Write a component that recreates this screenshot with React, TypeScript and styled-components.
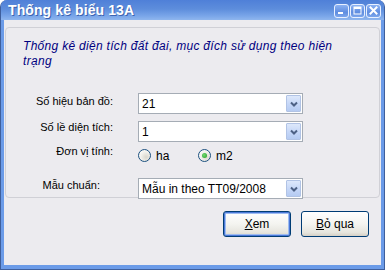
import styled, { createGlobalStyle } from "styled-components";

const GlobalStyle = createGlobalStyle`
  html, body {
    margin: 0;
    padding: 0;
    background: #ffffff;
  }
  body {
    font-family: "Liberation Sans", Arial, sans-serif;
  }
`;

function MinimizeGlyph() {
  return (
    <svg width="9" height="9" viewBox="0 0 9 9">
      <rect x="1" y="6" width="5" height="2" fill="#fff" />
    </svg>
  );
}

function MaximizeGlyph() {
  return (
    <svg width="9" height="9" viewBox="0 0 9 9">
      <rect x="1" y="1" width="7" height="7" fill="none" stroke="#fff" strokeWidth="1" />
      <rect x="1" y="1" width="7" height="2" fill="#fff" />
    </svg>
  );
}

function CloseGlyph() {
  return (
    <svg width="9" height="9" viewBox="0 0 9 9">
      <path d="M1.5 1.5 L7.5 7.5 M7.5 1.5 L1.5 7.5" stroke="#fff" strokeWidth="2" strokeLinecap="square" />
    </svg>
  );
}

function ArrowDown() {
  return (
    <svg width="8" height="6" viewBox="0 0 8 6">
      <path d="M1 1.5 L4 4.5 L7 1.5" fill="none" stroke="#4d6185" strokeWidth="2" />
    </svg>
  );
}

function Combo({ value }: { value: string }) {
  return (
    <ComboBox>
      <ComboText>{value}</ComboText>
      <ComboButton>
        <ArrowDown />
      </ComboButton>
    </ComboBox>
  );
}

function Radio({ label, checked }: { label: string; checked?: boolean }) {
  return (
    <RadioOption>
      <RadioCircle>{checked && <RadioDot />}</RadioCircle>
      <span>{label}</span>
    </RadioOption>
  );
}

export default function App() {
  return (
    <>
      <GlobalStyle />
      <Window>
        <TitleBar>
          <TitleText>Thống kê biểu 13A</TitleText>
          <TitleButtons>
            <TitleButton><MinimizeGlyph /></TitleButton>
            <TitleButton><MaximizeGlyph /></TitleButton>
            <TitleButton><CloseGlyph /></TitleButton>
          </TitleButtons>
        </TitleBar>
        <Client>
          <GroupBox>
            <Description>
              Thống kê diện tích đất đai, mục đích sử dụng theo hiện trạng
            </Description>
            <Form>
              <Label $offset={2}>Số hiệu bản đồ:</Label>
              <Combo value="21" />
              <Label $offset={0}>Số lề diện tích:</Label>
              <Combo value="1" />
              <Label $offset={-4}>Đơn vị tính:</Label>
              <RadioGroup>
                <Radio label="ha" />
                <Radio label="m2" checked />
              </RadioGroup>
              <Label $offset={1} $pad={13} $spaced>Mẫu chuẩn:</Label>
              <Spaced>
                <Combo value="Mẫu in theo TT09/2008" />
              </Spaced>
            </Form>
          </GroupBox>
          <ButtonRow>
            <Button $default>
              <u>X</u>em
            </Button>
            <Button>
              <u>B</u>ỏ qua
            </Button>
          </ButtonRow>
        </Client>
      </Window>
    </>
  );
}

const Window = styled.div`
  width: 385px;
  height: 270px;
  box-sizing: border-box;
  display: flex;
  flex-direction: column;
  background: #6b9be8;
  border: 1px solid #3f5f9c;
  border-top: none;
  border-radius: 7px 7px 0 0;
  overflow: hidden;
`;

const TitleBar = styled.div`
  height: 20px;
  flex: none;
  display: flex;
  align-items: center;
  justify-content: space-between;
  padding: 0 3px 0 7px;
  background: linear-gradient(#4f80d8 0%, #5d8ddc 45%, #7aa6e9 80%, #8fb6ee 100%);
`;

const TitleText = styled.div`
  color: #ffffff;
  font-weight: bold;
  font-size: 14px;
  letter-spacing: 0.1px;
  text-shadow: 1px 1px 0 #3c63b0;
  margin-top: -1px;
`;

const TitleButtons = styled.div`
  display: flex;
  gap: 1px;
  margin-top: 1px;
`;

const TitleButton = styled.div`
  width: 15px;
  height: 14px;
  box-sizing: border-box;
  border: 1px solid #e8f0ff;
  border-radius: 3px;
  background: linear-gradient(#8cb2f2, #5f8de0 60%, #7ca6ec);
  display: flex;
  align-items: center;
  justify-content: center;
`;

const Client = styled.div`
  flex: 1;
  margin: 0 3px 4px 3px;
  background: #ecebef;
  display: flex;
  flex-direction: column;
  padding: 7px 1px 0 1px;
`;

const GroupBox = styled.div`
  height: 171px;
  box-sizing: border-box;
  border: 1px solid #d0d0d6;
  border-radius: 4px;
  padding: 11px 0 0 17px;
`;

const Description = styled.div`
  width: 336px;
  color: #000080;
  font-style: italic;
  font-size: 12px;
  line-height: 15px;
  letter-spacing: 0.3px;
`;

const Form = styled.div`
  display: grid;
  grid-template-columns: 90px 165px;
  column-gap: 25px;
  row-gap: 7px;
  margin-top: 24px;
  align-items: start;
`;

const Label = styled.div<{ $offset: number; $pad?: number; $spaced?: boolean }>`
  font-size: 11px;
  color: #000000;
  text-align: right;
  line-height: 13px;
  padding-right: ${({ $pad }) => $pad ?? 0}px;
  margin-top: ${({ $offset, $spaced }) => $offset + ($spaced ? 9 : 0)}px;
`;

const Spaced = styled.div`
  margin-top: 9px;
`;

const ComboBox = styled.div`
  width: 165px;
  height: 21px;
  box-sizing: border-box;
  border: 1px solid #a5acb5;
  background: #ffffff;
  display: flex;
  align-items: center;
  justify-content: space-between;
  padding: 1px;
`;

const ComboText = styled.div`
  font-size: 12px;
  padding-left: 2px;
  color: #000000;
`;

const ComboButton = styled.div`
  width: 15px;
  height: 17px;
  box-sizing: border-box;
  border: 1px solid #b1c3e5;
  border-radius: 1px;
  background: linear-gradient(#dde8fb, #c3d5f7 60%, #b5cbf2);
  display: flex;
  align-items: center;
  justify-content: center;
`;

const RadioGroup = styled.div`
  display: flex;
  height: 13px;
  margin-top: 0;
`;

const RadioOption = styled.div`
  width: 60px;
  display: flex;
  align-items: center;
  gap: 5px;
  font-size: 12px;
  color: #000000;
`;

const RadioCircle = styled.div`
  width: 13px;
  height: 13px;
  box-sizing: border-box;
  border-radius: 50%;
  border: 1px solid #1c5180;
  background: radial-gradient(circle at 65% 65%, #d8d6cc 0%, #f4f3ee 55%, #ffffff 100%);
  display: flex;
  align-items: center;
  justify-content: center;
`;

const RadioDot = styled.div`
  width: 5px;
  height: 5px;
  border-radius: 50%;
  background: radial-gradient(circle at 40% 40%, #74d874, #21a121);
`;

const ButtonRow = styled.div`
  display: flex;
  justify-content: flex-end;
  gap: 10px;
  margin-top: 13px;
  padding-right: 11px;
`;

const Button = styled.div<{ $default?: boolean }>`
  width: 68px;
  height: 26px;
  box-sizing: border-box;
  border: 1px solid #003c74;
  border-radius: 3px;
  background: linear-gradient(#ffffff 0%, #f4f4f0 50%, #e6e5de 85%, #d6d0c5 100%);
  box-shadow: ${({ $default }) =>
    $default ? "inset 0 0 0 1px #4a78d8, inset 0 0 0 2px #9ebcf0" : "none"};
  display: flex;
  align-items: center;
  justify-content: center;
  font-size: 12px;
  color: #000000;

  u {
    text-decoration: underline;
  }
`;
